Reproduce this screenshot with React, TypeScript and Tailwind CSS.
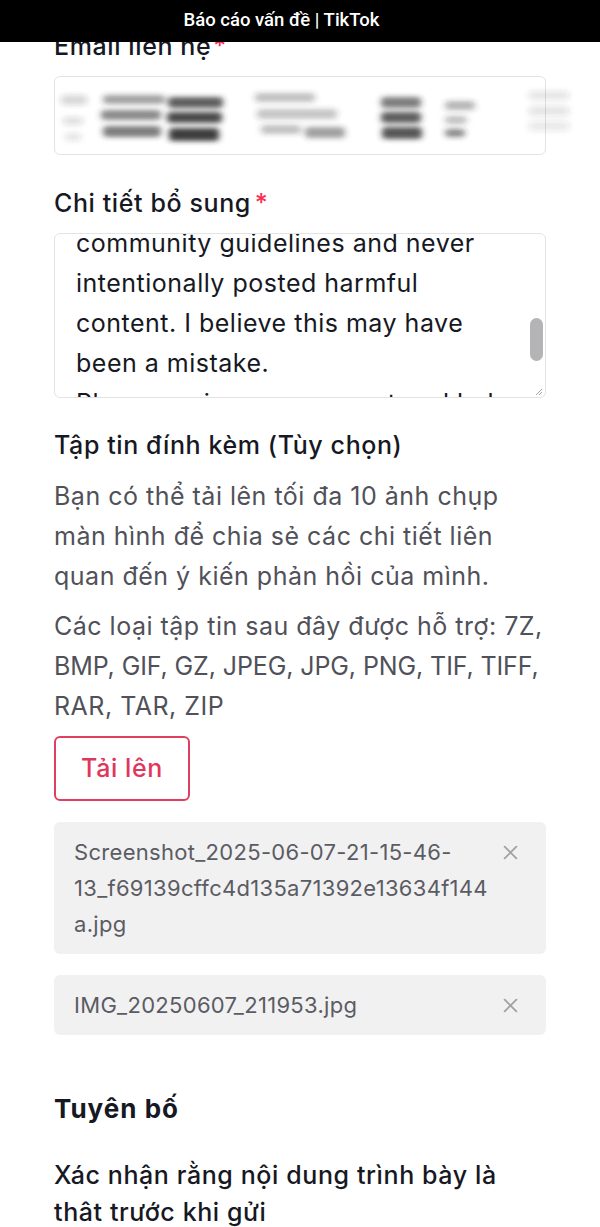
const FONT = "font-['Inter','Noto_Sans',sans-serif]";

function CloseIcon() {
  return (
    <svg width="17" height="17" viewBox="0 0 16 16" className="shrink-0">
      <path d="M2.5 2.5 L13.5 13.5 M13.5 2.5 L2.5 13.5" stroke="#a3a3a6" strokeWidth="1.8" strokeLinecap="round" />
    </svg>
  );
}

function Blur() {
  // redacted email, smeared
  const blobs: [number, number, number, number, number][] = [
    [6, 18, 26, 10, 0.18],
    [8, 40, 20, 8, 0.15],
    [10, 56, 16, 8, 0.12],
    [48, 18, 62, 9, 0.45],
    [46, 33, 60, 10, 0.55],
    [48, 49, 58, 11, 0.62],
    [113, 20, 55, 11, 0.75],
    [112, 35, 55, 11, 0.85],
    [114, 51, 50, 13, 0.9],
    [200, 16, 60, 9, 0.3],
    [202, 32, 80, 10, 0.28],
    [206, 48, 40, 9, 0.3],
    [250, 50, 40, 11, 0.45],
    [326, 20, 40, 11, 0.6],
    [326, 35, 40, 11, 0.75],
    [327, 50, 40, 12, 0.8],
    [390, 24, 30, 9, 0.35],
    [390, 39, 22, 8, 0.3],
    [390, 52, 20, 8, 0.55],
    [474, 14, 40, 9, 0.12],
    [474, 29, 40, 10, 0.12],
    [474, 44, 40, 10, 0.1],
  ];
  return (
    <svg className="absolute left-0 top-0 overflow-visible" width="520" height="79">
      <defs>
        <filter id="smear" x="-20%" y="-50%" width="140%" height="200%">
          <feGaussianBlur stdDeviation="3 2.5" />
        </filter>
      </defs>
      <g filter="url(#smear)">
        {blobs.map(([x, y, w, h, o], i) => (
          <rect key={i} x={x} y={y} width={w} height={h} rx="4" fill="#2a2a2a" opacity={o} />
        ))}
      </g>
    </svg>
  );
}

const details = [
  'community guidelines and never',
  'intentionally posted harmful',
  'content. I believe this may have',
  'been a mistake.',
  'Please review my account and help',
];

export default function App() {
  return (
    <div className={`min-h-[1227px] bg-white text-[#161823] ${FONT}`}>
      <div className="fixed top-0 left-0 right-0 z-10 h-[42px] bg-black flex items-center justify-center pr-[37px]">
        <span className="font-['Roboto',sans-serif] font-medium text-[18.5px] text-white">Báo cáo vấn đề | TikTok</span>
      </div>

      <div className="px-[54px] pt-[30px] pb-10">
        <div className="text-[25px] leading-[32px] font-medium tracking-[0.6px]">
          Email liên hệ<span className="text-[#fe2c55] ml-0.5">*</span>
        </div>
        <div className="relative mt-[14px] h-[79px] rounded-md border border-[#e3e3e4]">
          <Blur />
        </div>

        <div className="mt-[32px] text-[25px] leading-[32px] font-medium tracking-[0.6px]">
          Chi tiết bổ sung<span className="text-[#fe2c55] ml-1">*</span>
        </div>
        <div className="relative mt-[14px] h-[165px] rounded-md border border-[#e3e3e4] overflow-hidden">
          <div className="-mt-[11px] pl-[21px] text-[25px] leading-[40px] tracking-[0.5px] text-[#161823]">
            {details.map((l) => (
              <div key={l} className="whitespace-nowrap">{l}</div>
            ))}
          </div>
          <div className="absolute right-[2px] top-[84px] h-[43px] w-[13px] rounded-full bg-[#b4b4b6]" />
          <svg className="absolute right-[2px] bottom-[1px]" width="8" height="8" viewBox="0 0 8 8">
            <path d="M7 1 L1 7 M7 4 L4 7" stroke="#9a9a9a" strokeWidth="0.9" />
          </svg>
        </div>

        <div className="mt-[32px] text-[25px] leading-[30px] font-medium tracking-[0.6px]">Tập tin đính kèm (Tùy chọn)</div>
        <div className="mt-[16px] text-[25px] leading-[40px] tracking-[0.5px] text-[#505159]">
          <div className="whitespace-nowrap">Bạn có thể tải lên tối đa 10 ảnh chụp</div>
          <div className="whitespace-nowrap">màn hình để chia sẻ các chi tiết liên</div>
          <div className="whitespace-nowrap">quan đến ý kiến phản hồi của mình.</div>
        </div>
        <div className="mt-[10px] text-[25px] leading-[40px] tracking-[0.5px] text-[#505159]">
          <div className="whitespace-nowrap">Các loại tập tin sau đây được hỗ trợ: 7Z,</div>
          <div className="whitespace-nowrap tracking-[-0.1px]">BMP, GIF, GZ, JPEG, JPG, PNG, TIF, TIFF,</div>
          <div>RAR, TAR, ZIP</div>
        </div>

        <button className="mt-[10px] h-[65px] w-[136px] rounded-md border-2 border-[#e0405f] text-[#e0365c] text-[25px] font-medium tracking-[0.6px]">
          Tải lên
        </button>

        <div className="mt-[21px] flex items-start justify-between rounded-md bg-[#f1f1f2] pl-[20px] pr-[27px] py-[12px]">
          <div className="text-[22px] leading-[36px] tracking-[0.3px] text-[#5b5c63]">
            <div className="whitespace-nowrap">Screenshot_2025-06-07-21-15-46-</div>
            <div className="whitespace-nowrap">13_f69139cffc4d135a71392e13634f144</div>
            <div>a.jpg</div>
          </div>
          <div className="mt-[10px]">
            <CloseIcon />
          </div>
        </div>

        <div className="mt-[21px] flex items-start justify-between rounded-md bg-[#f1f1f2] pl-[20px] pr-[27px] py-[12px]">
          <div className="text-[22px] leading-[36px] tracking-[0.3px] text-[#5b5c63] whitespace-nowrap">IMG_20250607_211953.jpg</div>
          <div className="mt-[10px]">
            <CloseIcon />
          </div>
        </div>

        <div className="mt-[58px] text-[26px] leading-[32px] font-bold tracking-[1px]">Tuyên bố</div>
        <div className="mt-[32px] text-[25px] leading-[37px] font-medium tracking-[0.6px]">
          <div>Xác nhận rằng nội dung trình bày là</div>
          <div>thât trước khi gửi</div>
        </div>
      </div>
    </div>
  );
}
